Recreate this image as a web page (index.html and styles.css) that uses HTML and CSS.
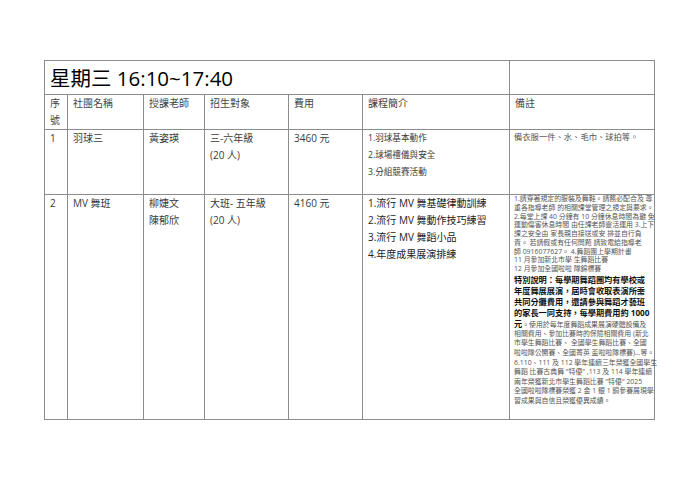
FILE: index.html
```html
<!DOCTYPE html>
<html lang="zh-Hant">
<head>
<meta charset="utf-8">
<title>星期三 16:10~17:40</title>
<link rel="stylesheet" href="styles.css">
</head>
<body>
<div class="page">
  <table class="sched">
    <colgroup>
      <col class="c-no"><col class="c-name"><col class="c-teacher"><col class="c-target"><col class="c-fee"><col class="c-intro"><col class="c-note">
    </colgroup>
    <tr class="r-title">
      <td colspan="6" class="title">星期三 16:10~17:40</td>
      <td></td>
    </tr>
    <tr class="r-head">
      <td>序號</td>
      <td>社團名稱</td>
      <td>授課老師</td>
      <td>招生對象</td>
      <td>費用</td>
      <td>課程簡介</td>
      <td>備註</td>
    </tr>
    <tr class="r-one">
      <td>1</td>
      <td>羽球三</td>
      <td>黃姿瑛</td>
      <td>三-六年級<br>(20 人)</td>
      <td>3460 元</td>
      <td class="intro-sm">1.羽球基本動作<br>2.球場禮儀與安全<br>3.分組競賽活動</td>
      <td class="note1">備衣服一件、水、毛巾、球拍等。</td>
    </tr>
    <tr class="r-two">
      <td>2</td>
      <td>MV 舞班</td>
      <td>柳婕文<br>陳郁欣</td>
      <td>大班- 五年級<br>(20 人)</td>
      <td>4160 元</td>
      <td class="intro-lg">1.流行 MV 舞基礎律動訓練<br>2.流行 MV 舞動作技巧練習<br>3.流行 MV 舞蹈小品<br>4.年度成果展演排練</td>
      <td class="note2">
        <div class="s">1.請穿著規定的服裝及舞鞋。請務必配合及 尊</div>
        <div class="s">重各指導老師 的相關課堂管理之規定與要求。</div>
        <div class="s">2.每堂上課 40 分鐘有 10 分鐘休息時間為避 免</div>
        <div class="s">運動傷害休息時間 由任課老師靈活運用 3.上下</div>
        <div class="s">課之安全由 家長親自接送或安 排並自行負</div>
        <div class="s">責。 若請假或有任何問題 請致電給指導老</div>
        <div class="s">師 0916077627。 4.舞蹈團上學期計畫</div>
        <div class="s">11 月參加新北市學 生舞蹈比賽</div>
        <div class="s">12 月參加全國啦啦 隊錦標賽</div>
        <div class="b">特別說明：每學期舞蹈團均有學校或</div>
        <div class="b">年度舞展展演，屆時會收取表演所需</div>
        <div class="b">共同分攤費用，還請參與舞蹈才藝班</div>
        <div class="b">的家長一同支持，每學期費用約 1000</div>
        <div class="b mix">元<span class="s-in">。使用於每年度舞蹈成果展演硬體設備及</span></div>
        <div class="t">相關費用、參加比賽時的保險相關費用 (新北</div>
        <div class="t">市學生舞蹈比賽、 全國學生舞蹈比賽、全國</div>
        <div class="t">啦啦隊公開賽、全國菁英 盃啦啦隊標賽)...等。</div>
        <div class="t">6.110、111 及 112 學年連續三年榮獲全國學生</div>
        <div class="t">舞蹈 比賽古典舞 "特優" ,113 及 114 學年連續</div>
        <div class="t">兩年榮獲新北市學生舞蹈比賽 "特優" 2025</div>
        <div class="t">全國啦啦隊標賽榮獲 2 金 1 銀 1 銅參賽展現學</div>
        <div class="t">習成果與自信且榮獲優異成績。</div>
      </td>
    </tr>
  </table>
</div>
</body>
</html>
```

FILE: styles.css
```css
html, body {
  margin: 0;
  padding: 0;
  background: #ffffff;
}

body {
  font-family: "Open Sans", "Noto Sans CJK TC", sans-serif;
  color: #3a3a3a;
  font-size: 10px;
}

.page {
  padding: 60px 0 0 44px;
}

.sched {
  border-collapse: collapse;
  table-layout: fixed;
  width: 610px;
}

.c-no { width: 23px; }
.c-name { width: 76px; }
.c-teacher { width: 61px; }
.c-target { width: 84px; }
.c-fee { width: 74px; }
.c-intro { width: 147px; }
.c-note { width: 145px; }

.sched td {
  border: 1px solid #8c8c8c;
  vertical-align: top;
  padding: 0 4px 0 5px;
  line-height: 17px;
  box-sizing: border-box;
}

.r-title { height: 34px; }
.r-head { height: 34px; }
.r-one { height: 65px; }
.r-two { height: 225px; }

.sched td.title {
  font-size: 20.5px;
  color: #000000;
  vertical-align: middle;
  padding: 0 0 0 5px;
  line-height: 24px;
}

.r-head td {
  color: #444444;
}

.intro-sm {
  font-size: 8.6px;
  line-height: 17.5px;
}

.intro-lg {
  font-size: 10px;
  color: #222222;
}

.sched td.note1 {
  font-size: 8.3px;
  color: #555555;
  padding-left: 4px;
  line-height: 14px;
}

.sched td.note2 {
  padding: 0 0 0 4px;
  line-height: normal;
}

.note2 .s {
  font-size: 6.9px;
  height: 8.75px;
  line-height: 8.75px;
  white-space: nowrap;
  color: #555555;
}

.note2 .b {
  font-size: 8.2px;
  font-weight: bold;
  height: 11px;
  line-height: 11px;
  white-space: nowrap;
  color: #111111;
}

.note2 .s-in {
  font-size: 6.9px;
  font-weight: normal;
  color: #555555;
}

.note2 .t {
  font-size: 6.9px;
  height: 9.6px;
  line-height: 9.6px;
  white-space: nowrap;
  color: #555555;
}
```
